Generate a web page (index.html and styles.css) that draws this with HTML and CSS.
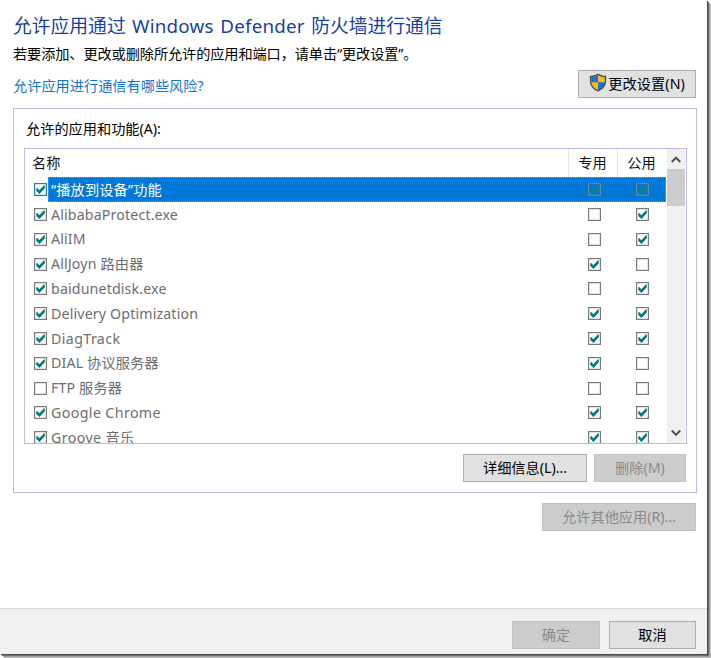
FILE: index.html
```
<!DOCTYPE html>
<html lang="zh-CN">
<head>
<meta charset="utf-8">
<title>允许的应用</title>
<link rel="stylesheet" href="styles.css">
</head>
<body>
<svg class="defs" aria-hidden="true">
  <symbol id="off" viewBox="0 0 13 13"><rect class="box" x=".6" y=".6" width="11.8" height="11.8"/></symbol>
  <symbol id="on" viewBox="0 0 13 13"><rect class="box" x=".6" y=".6" width="11.8" height="11.8"/><path class="tick" d="M2.300 5.300 3.200 4.900 5.300 7.200 10 2.300 10.800 2.500V5.200L5.500 10.900 2.300 7.900z"/></symbol>
</svg>
<div class="window">
  <main class="content">
    <h1>允许应用通过 <span class="latin">Windows Defender</span> 防火墙进行通信</h1>
    <p class="intro">若要添加、更改或删除所允许的应用和端口，请单击“更改设置”。</p>
    <div class="linkbar">
      <a class="link">允许应用进行通信有哪些风险?</a>
      <button class="btn change">
        <svg class="shield" viewBox="0 0 18 19">
          <path fill="#3f4a57" d="M9 .4C6.700 2 4 2.700.9 2.700V8c0 5 3.500 8.500 8.100 10.600C13.600 16.500 17.100 13 17.100 8V2.700C14 2.700 11.300 2 9 .4z"/>
          <path fill="#1976d2" d="M9 9.200V17.200c3.700-1.800 6.300-4.300 6.800-8z"/>
          <path fill="#fdb827" d="M9 2C7 3.300 4.800 4 2.200 4.100V9.200H9z"/>
          <path fill="#1976d2" d="M9 2C7 3.300 4.800 4 2.200 4.100V9.200H9z"/>
          <path fill="#fdb827" d="M9 2c2 1.300 4.200 2 6.800 2.100V9.200H9zM2.200 9.200H9v8C5.300 15.400 2.700 12.900 2.200 9.200z"/>
        </svg><span>更改设置(N)</span></button>
    </div>
    <section class="group">
      <h2>允许的应用和功能(A):</h2>
      <div class="list">
        <div class="table">
          <div class="row head"><span class="name">名称</span><span class="col">专用</span><span class="col">公用</span></div>
          <div class="row selected"><svg class="cb"><use href="#on"/></svg><div class="hl"><span class="name">“播放到设备”功能</span><span class="col"><svg class="cb"><use href="#on"/></svg></span><span class="col"><svg class="cb"><use href="#on"/></svg></span></div></div>
          <div class="row"><svg class="cb"><use href="#on"/></svg><span class="name">AlibabaProtect.exe</span><span class="col"><svg class="cb"><use href="#off"/></svg></span><span class="col"><svg class="cb"><use href="#on"/></svg></span></div>
          <div class="row"><svg class="cb"><use href="#on"/></svg><span class="name">AliIM</span><span class="col"><svg class="cb"><use href="#off"/></svg></span><span class="col"><svg class="cb"><use href="#on"/></svg></span></div>
          <div class="row"><svg class="cb"><use href="#on"/></svg><span class="name">AllJoyn 路由器</span><span class="col"><svg class="cb"><use href="#on"/></svg></span><span class="col"><svg class="cb"><use href="#off"/></svg></span></div>
          <div class="row"><svg class="cb"><use href="#on"/></svg><span class="name">baidunetdisk.exe</span><span class="col"><svg class="cb"><use href="#off"/></svg></span><span class="col"><svg class="cb"><use href="#on"/></svg></span></div>
          <div class="row"><svg class="cb"><use href="#on"/></svg><span class="name">Delivery Optimization</span><span class="col"><svg class="cb"><use href="#on"/></svg></span><span class="col"><svg class="cb"><use href="#on"/></svg></span></div>
          <div class="row"><svg class="cb"><use href="#on"/></svg><span class="name wide">DiagTrack</span><span class="col"><svg class="cb"><use href="#on"/></svg></span><span class="col"><svg class="cb"><use href="#on"/></svg></span></div>
          <div class="row"><svg class="cb"><use href="#on"/></svg><span class="name">DIAL 协议服务器</span><span class="col"><svg class="cb"><use href="#on"/></svg></span><span class="col"><svg class="cb"><use href="#off"/></svg></span></div>
          <div class="row"><svg class="cb"><use href="#off"/></svg><span class="name">FTP 服务器</span><span class="col"><svg class="cb"><use href="#off"/></svg></span><span class="col"><svg class="cb"><use href="#off"/></svg></span></div>
          <div class="row"><svg class="cb"><use href="#on"/></svg><span class="name wide">Google Chrome</span><span class="col"><svg class="cb"><use href="#on"/></svg></span><span class="col"><svg class="cb"><use href="#on"/></svg></span></div>
          <div class="row"><svg class="cb"><use href="#on"/></svg><span class="name wide">Groove 音乐</span><span class="col"><svg class="cb"><use href="#on"/></svg></span><span class="col"><svg class="cb"><use href="#on"/></svg></span></div>
        </div>
        <div class="scroll">
          <svg class="arrow" viewBox="0 0 18 20"><path d="M4.800 13 9 8.600l4.200 4.400"/></svg>
          <div class="thumb"></div>
          <svg class="arrow down" viewBox="0 0 18 20"><path d="M4.800 7.500 9 11.900l4.200-4.400"/></svg>
        </div>
      </div>
      <div class="actions">
        <button class="btn details">详细信息(L)...</button>
        <button class="btn off remove">删除(M)</button>
      </div>
    </section>
    <div class="other"><button class="btn off allow">允许其他应用(R)...</button></div>
  </main>
  <footer class="footer">
    <button class="btn off ok">确定</button>
    <button class="btn cancel">取消</button>
  </footer>
</div>
</body>
</html>
```
FILE: styles.css
```
* { box-sizing: border-box; }
body {
  margin: 0;
  width: 711px;
  height: 658px;
  overflow: hidden;
  background: #fff;
  color: #000;
  font: 14.2px/20px "Noto Sans", "Noto Sans CJK SC", sans-serif;
  --box-fill: #fff;
  --box-line: #7a7a7a;
  --tick: #007c78;
}
.defs { position: absolute; width: 0; height: 0; }
.window {
  width: 707px;
  height: 654px;
  display: flex;
  flex-direction: column;
  background: #fff;
  box-shadow: 1px 1px 0 #4a4a4a, 2px 2px 0 #6e6e6e, 3px 3px 0 #9a9a9a, 4px 4px 0 #c4c4c4;
}
.content { flex: 1; padding: 12px 10px 0 13px; }
h1 {
  margin: 0;
  height: 28px;
  font-size: 18.8px;
  line-height: 28px;
  font-weight: 400;
  color: #1a3fa3;
  white-space: nowrap;
  word-spacing: 1.5px;
}
.latin { letter-spacing: .2px; }
.intro { margin: 4px 0 0; height: 20px; letter-spacing: -.1px; white-space: nowrap; }
.linkbar { display: flex; justify-content: space-between; height: 44px; padding: 6px 1px 0 0; }
.link { margin-top: 6px; color: #1273cf; }
.btn {
  display: flex;
  align-items: center;
  justify-content: center;
  height: 28px;
  padding: 0;
  border: 1px solid #adadad;
  background: #e1e1e1;
  color: #000;
  font: inherit;
  white-space: nowrap;
}
.off { border-color: #c0c0c0; background: #ccc; color: #8a8a8a; }
.change { width: 118px; gap: 1px; }
.change span { letter-spacing: .1px; }
.shield { width: 18px; height: 19px; margin-top: -3px; }
.group { height: 385px; padding: 10px 9px 0 10px; border: 1px solid #bbbbe6; }
h2 { margin: 0 0 0 2px; height: 29px; font-size: 14.2px; line-height: 20px; font-weight: 400; }
.list { display: flex; height: 296px; border: 1px solid #bbbbe6; overflow: hidden; }
.table { flex: 1; }
.row { display: flex; align-items: center; height: 24.8px; padding-left: 9px; color: #6d6d6d; }
.name { flex: 1; padding-left: 4px; letter-spacing: .15px; white-space: nowrap; }
.wide { letter-spacing: .4px; }
.col { display: flex; width: 48.500px; justify-content: center; align-items: center; height: 100%; }
.col .cb { margin-left: 2px; }
.head { height: 28.400px; padding-left: 7px; color: #111; }
.head .name { padding-left: 0; }
.head .col { width: 49px; padding-right: 1px; border-left: 1px solid #e3e3e3; }
.cb { display: block; flex: none; width: 13px; height: 13px; }
.box { fill: var(--box-fill); stroke: var(--box-line); stroke-width: 1.2; }
.tick { fill: var(--tick); }
.selected { --box-line: #2a76b5; }
.hl {
  display: flex;
  flex: 1;
  align-items: center;
  height: 24.8px;
  margin-left: 1px;
  border: 1px dotted #d98a4a;
  background: #0078d7;
  color: #fff;
  --box-fill: #0078d7;
  --box-line: #75808c;
  --tick: #008a80;
}
.hl .name { padding-left: 2px; }
.hl .col .cb { margin-left: 4px; }
.scroll { display: flex; flex-direction: column; width: 20px; padding: 0 1px; background: #f0f0f0; background-clip: content-box; }
.arrow { width: 18px; height: 20px; fill: none; stroke: #505050; stroke-width: 2; }
.thumb { height: 37px; background: #cdcdcd; }
.down { margin-top: auto; }
.actions { display: flex; justify-content: flex-end; gap: 7px; padding: 10px 1px 0 0; }
.details { width: 124px; }
.remove { width: 92px; }
.other { display: flex; justify-content: flex-end; padding: 10px 1px 0 0; }
.allow { width: 154px; }
.footer {
  display: flex;
  justify-content: flex-end;
  gap: 9px;
  height: 46px;
  padding: 12px 11px 0 0;
  border-top: 1px solid #d6d6d6;
  background: #f0f0f0;
}
.ok { width: 88px; }
.cancel { width: 87px; }
```
